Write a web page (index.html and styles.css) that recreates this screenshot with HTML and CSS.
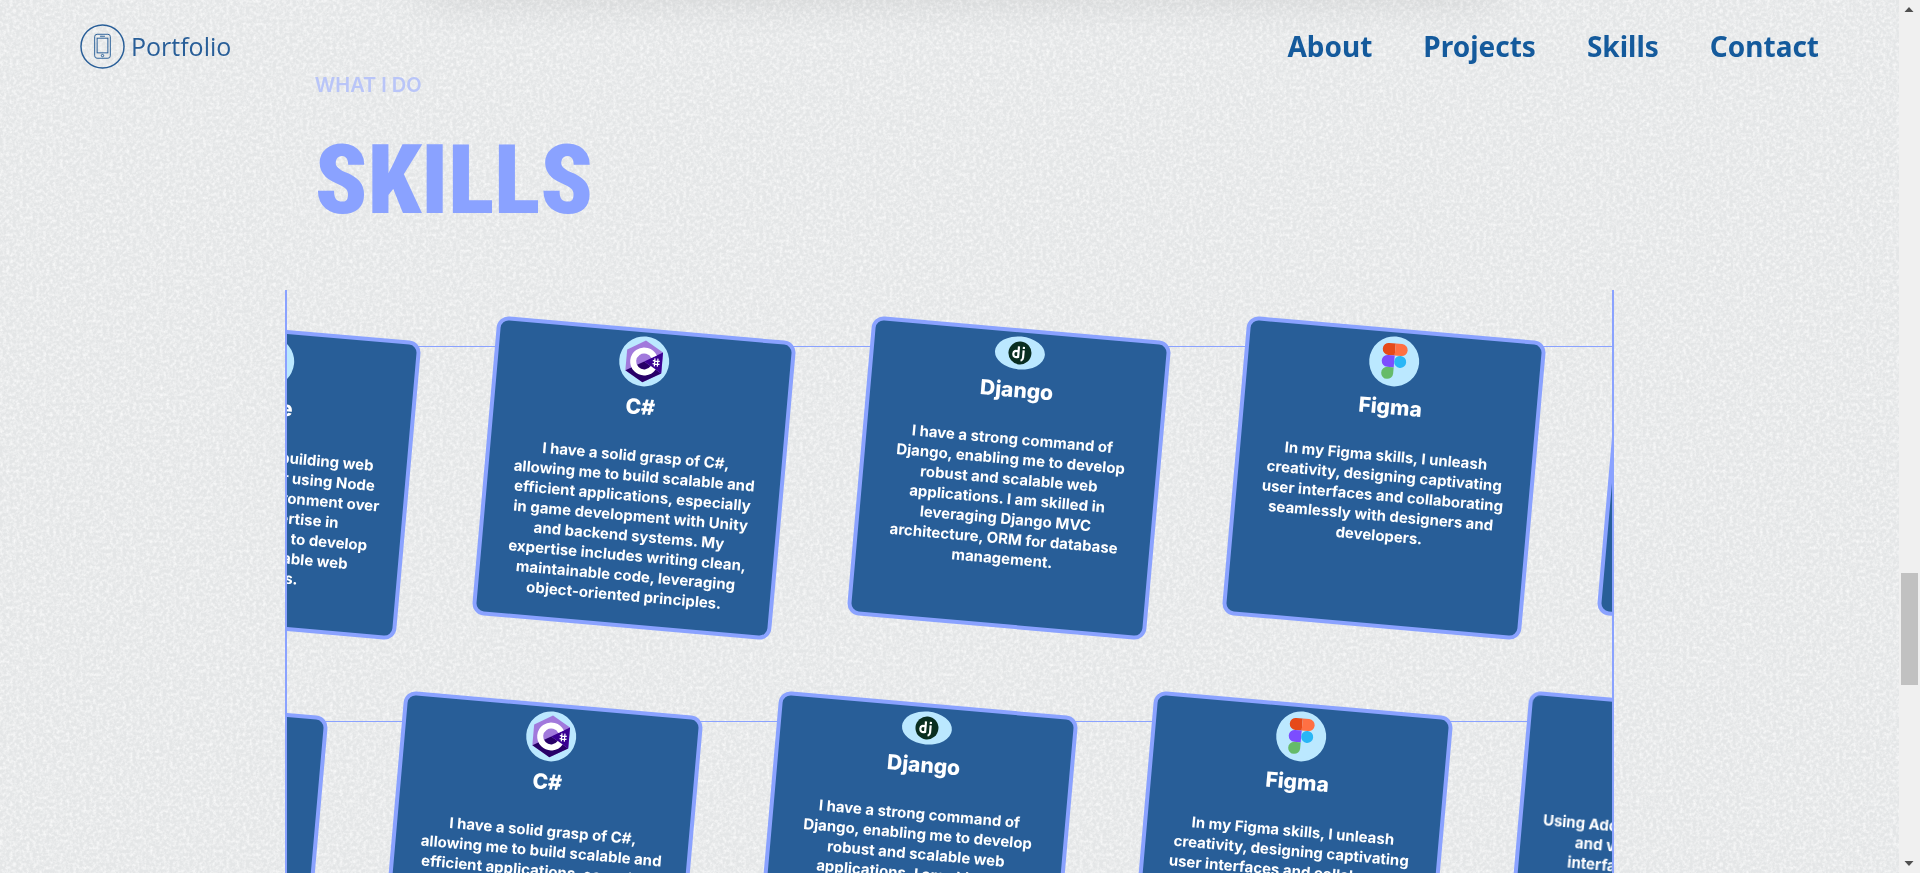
FILE: index.html
```html
<!DOCTYPE html>
<html lang="en">
<head>
<meta charset="utf-8">
<title>Portfolio</title>
<link rel="stylesheet" href="styles.css">
</head>
<body>
<svg class="grain" aria-hidden="true">
  <filter id="grain" x="0" y="0" width="100%" height="100%">
    <feTurbulence type="fractalNoise" baseFrequency="0.3" numOctaves="3" seed="4"/>
    <feColorMatrix type="matrix" values="0 0 0 0 1  0 0 0 0 1  0 0 0 0 1  1.8 0 0 0 -0.65"/>
  </filter>
  <rect width="100%" height="100%" filter="url(#grain)"/>
</svg>

<svg class="symbols" aria-hidden="true">
  <symbol id="csharp" viewBox="0 0 50 50">
    <path fill="#a179dc" d="M25 4 43 14.500V35.500L25 46 7 35.500V14.500Z"/>
    <path fill="#280068" d="M7 35.500 25 25 43 35.500 25 46Z"/>
    <path fill="#390091" d="M25 25 43 14.500V35.500Z"/>
    <path fill="none" stroke="#fff" stroke-width="6" d="M34.500 19.500A11 11 0 1 0 34.500 30.500"/>
    <path stroke="#fff" stroke-width="1.200" d="M35.500 21v8M38.500 21v8M33.500 23.500h7M33.500 26.500h7"/>
  </symbol>
  <symbol id="figma" viewBox="0 0 50 50">
    <path fill="#e64a19" d="M25 7h-6.500a6 6 0 0 0 0 12H25Z"/>
    <path fill="#ff7043" d="M25 7h6.500a6 6 0 0 1 0 12H25Z"/>
    <path fill="#7c4dff" d="M25 19h-6.500a6 6 0 0 0 0 12H25Z"/>
    <circle fill="#29b6f6" cx="31" cy="25" r="6"/>
    <path fill="#66bb6a" d="M25 31h-6.500a6 6 0 1 0 6.500 6Z"/>
  </symbol>
  <symbol id="django" viewBox="0 0 50 33">
    <circle fill="#092e20" cx="25" cy="16.500" r="11.500"/>
    <path fill="none" stroke="#fff" stroke-width="2.200" d="M23.500 10v10.500c-3 1-5 .200-5-2.700s2-3.500 5-2.600M28.500 13.500v7.500c0 2-.500 2.500-2.200 3.200M28.500 10v2.200"/>
  </symbol>
  <symbol id="node" viewBox="0 0 50 50">
    <path fill="#66bb6a" d="M25 7 41 16V34L25 43 9 34V16Z"/>
  </symbol>
</svg>

<div class="previous-edge"></div>

<header class="site-header">
  <a class="brand" href="#home">
    <svg class="brand-mark" viewBox="0 0 46 46" fill="none" stroke="currentColor" aria-hidden="true">
      <circle cx="23" cy="23" r="22" stroke-width="1.500"/>
      <rect x="15" y="10.500" width="16" height="24.500" rx="2.500"/>
      <rect x="17.500" y="14.500" width="11" height="15"/>
      <path d="M20.500 12.500h5"/>
      <circle cx="23" cy="32.300" r="1.200"/>
    </svg>
    <span>Portfolio</span>
  </a>
  <nav class="site-nav">
    <a href="#about">About</a>
    <a href="#projects">Projects</a>
    <a href="#skills">Skills</a>
    <a href="#contact">Contact</a>
  </nav>
</header>

<main class="skills" id="skills">
  <div class="skills-heading">
    <p class="eyebrow">WHAT I DO</p>
    <h2>SKILLS</h2>
  </div>
  <div class="frame">
    <div class="row">
      <div class="track">
        <div class="cell"><article class="card">
          <svg class="icon"><use href="#node"/></svg>
          <h3>Node</h3>
          <p>I have experience building web<br>applications, server using Node<br>as a runtime JS environment over<br>years, and expertise in<br>many backend tools to develop<br>efficient and scalable web<br>applications.</p>
        </article></div>
        <div class="cell"><article class="card">
          <svg class="icon"><use href="#csharp"/></svg>
          <h3>C#</h3>
          <p>I have a solid grasp of C#,<br>allowing me to build scalable and<br>efficient applications, especially<br>in game development with Unity<br>and backend systems. My<br>expertise includes writing clean,<br>maintainable code, leveraging<br>object-oriented principles.</p>
        </article></div>
        <div class="cell"><article class="card">
          <svg class="icon icon-wide"><use href="#django"/></svg>
          <h3>Django</h3>
          <p>I have a strong command of<br>Django, enabling me to develop<br>robust and scalable web<br>applications. I am skilled in<br>leveraging Django MVC<br>architecture, ORM for database<br>management.</p>
        </article></div>
        <div class="cell"><article class="card">
          <svg class="icon"><use href="#figma"/></svg>
          <h3>Figma</h3>
          <p>In my Figma skills, I unleash<br>creativity, designing captivating<br>user interfaces and collaborating<br>seamlessly with designers and<br>developers.</p>
        </article></div>
        <div class="cell"><article class="card"></article></div>
      </div>
    </div>
    <div class="row">
      <div class="track track-shifted">
        <div class="cell"><article class="card"></article></div>
        <div class="cell"><article class="card">
          <svg class="icon"><use href="#csharp"/></svg>
          <h3>C#</h3>
          <p>I have a solid grasp of C#,<br>allowing me to build scalable and<br>efficient applications, especially<br>in game development with Unity<br>and backend systems. My<br>expertise includes writing clean,<br>maintainable code, leveraging<br>object-oriented principles.</p>
        </article></div>
        <div class="cell"><article class="card">
          <svg class="icon icon-wide"><use href="#django"/></svg>
          <h3>Django</h3>
          <p>I have a strong command of<br>Django, enabling me to develop<br>robust and scalable web<br>applications. I am skilled in<br>leveraging Django MVC<br>architecture, ORM for database<br>management.</p>
        </article></div>
        <div class="cell"><article class="card">
          <svg class="icon"><use href="#figma"/></svg>
          <h3>Figma</h3>
          <p>In my Figma skills, I unleash<br>creativity, designing captivating<br>user interfaces and collaborating<br>seamlessly with designers and<br>developers.</p>
        </article></div>
        <div class="cell"><article class="card">
          <svg class="icon"></svg>
          <h3>Adobe</h3>
          <p>Using Adobe tools, I make designs<br>and visual content, clean<br>interfaces and prototypes.</p>
        </article></div>
      </div>
    </div>
  </div>
</main>

<div class="scrollbar" aria-hidden="true">
  <svg viewBox="0 0 20 20"><path d="M5.500 12 10 7l4.500 5Z"/></svg>
  <div class="thumb"></div>
  <svg viewBox="0 0 20 20"><path d="M5.500 8 10 13l4.500-5Z"/></svg>
</div>
</body>
</html>
```

FILE: styles.css
```css
* { box-sizing: border-box; margin: 0; }

body {
  height: 100vh;
  padding-right: 21px;
  overflow: hidden;
  background: #e4e6e7;
  color: #fff;
  font-family: Inter, "Open Sans", sans-serif;
}

.grain { position: fixed; inset: 0; z-index: -1; width: 100%; height: 100%; opacity: 0.8; }
.symbols { position: absolute; width: 0; height: 0; }

.previous-edge {
  position: absolute;
  top: -32px;
  left: 22%;
  right: 22%;
  height: 20px;
  box-shadow: 0 0 50px rgba(0, 0, 0, 0.2);
}

.site-header {
  position: fixed;
  inset: 0 21px auto 0;
  z-index: 2;
  height: 92px;
  padding: 0 80px;
  display: flex;
  align-items: center;
  justify-content: space-between;
}

.brand {
  display: flex;
  align-items: center;
  gap: 6px;
  color: #285e98;
  font-family: "Open Sans", sans-serif;
  font-size: 25px;
  text-decoration: none;
}
.brand-mark { width: 45px; height: 45px; }

.site-nav { display: flex; gap: 51px; }
.site-nav a {
  color: #145a9c;
  font: 700 28px/40px "Noto Sans", sans-serif;
  text-decoration: none;
}

.skills { width: 70%; margin: 0 auto; padding-top: 70px; }
.skills-heading { padding: 0 30px; height: 220px; }
.eyebrow { color: #b9c5f8; font-size: 20px; font-weight: 600; line-height: 30px; }
.skills h2 {
  color: #8aa2ff;
  font-family: "Roboto Condensed", "Liberation Sans Narrow", "Liberation Sans", sans-serif;
  font-size: 96px;
  font-weight: 900;
  line-height: 160px;
}

.frame {
  overflow: hidden;
  border: solid #8aa2ff;
  border-width: 0 2px;
}

.row { position: relative; height: 375px; }
.row::before {
  content: "";
  position: absolute;
  top: 56px;
  width: 100%;
  border-top: 1px solid #8aa2ff;
}

.track { display: flex; width: max-content; transform: translateX(-215px); }
.track-shifted { transform: translateX(-308px); }

.cell {
  display: grid;
  place-items: center;
  width: 375px;
  height: 375px;
}

.card {
  width: 300px;
  height: 300px;
  padding-top: 4px;
  display: flex;
  flex-direction: column;
  align-items: center;
  border: 4px solid #8aa2ff;
  border-radius: 12px;
  outline: 1px solid transparent;
  background: #285e98;
  text-align: center;
  transform: rotate(5deg);
}
.icon { width: 50px; height: 50px; flex: none; border-radius: 50%; background: #bbe8ff; }
.icon-wide { height: 33px; }
.card h3 { margin: 6px 0 24px; font-size: 21px; font-weight: 800; line-height: 30px; }
.card p { font-size: 15px; font-weight: 700; line-height: 20px; white-space: nowrap; }

.scrollbar {
  position: fixed;
  inset: 0 0 0 auto;
  width: 21px;
  display: flex;
  flex-direction: column;
  justify-content: space-between;
  background: #f0f0f0;
}
.scrollbar svg { width: 20px; height: 20px; fill: #505050; }
.thumb { width: 17px; height: 112px; margin: auto auto 168px; background: #c1c1c1; }
```
